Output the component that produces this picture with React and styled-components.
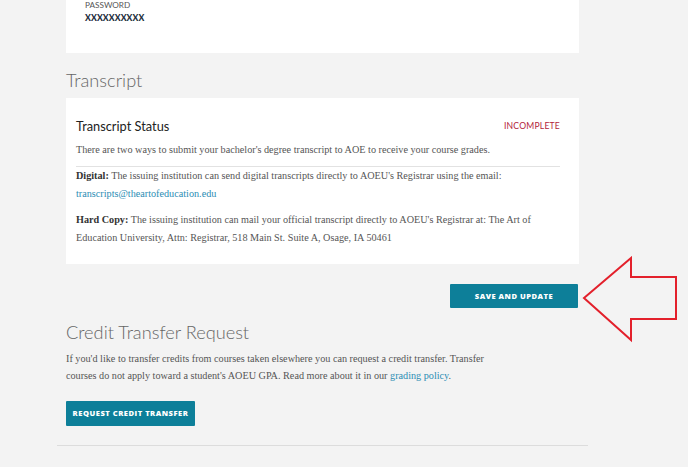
import styled, { createGlobalStyle } from "styled-components";

const GlobalStyle = createGlobalStyle`
    body {
        margin: 0;
        background: #f3f3f3;
    }
`;

const App = () => {
    return (
        <Page>
            <GlobalStyle />
            <Column>
                <Card $tight>
                    <FieldLabel>Password</FieldLabel>
                    <FieldValue>XXXXXXXXXX</FieldValue>
                </Card>

                <SectionTitle>Transcript</SectionTitle>
                <Card>
                    <StatusRow>
                        <StatusTitle>Transcript Status</StatusTitle>
                        <StatusBadge>Incomplete</StatusBadge>
                    </StatusRow>
                    <Text>
                        There are two ways to submit your bachelor's degree transcript to AOE to receive your course grades.
                    </Text>
                    <Rule />
                    <Text>
                        <b>Digital:</b> The issuing institution can send digital transcripts directly to AOEU's Registrar using the email:
                        <br />
                        <Link href="#">transcripts@theartofeducation.edu</Link>
                    </Text>
                    <Text $gap>
                        <b>Hard Copy:</b> The issuing institution can mail your official transcript directly to AOEU's Registrar at: The Art of Education University, Attn: Registrar, 518 Main St. Suite A, Osage, IA 50461
                    </Text>
                </Card>

                <Actions>
                    <Button $w="128px">Save and Update</Button>
                </Actions>

                <SectionTitle $top="12px">Credit Transfer Request</SectionTitle>
                <Intro>
                    If you'd like to transfer credits from courses taken elsewhere you can request a credit transfer. Transfer courses do not apply toward a student's AOEU GPA. Read more about it in our <Link href="#">grading policy</Link>.
                </Intro>
                <Button $w="129px" $h="25px">Request Credit Transfer</Button>
                <BottomRule />
            </Column>

            <Callout width="100" height="90" viewBox="0 0 100 90">
                <polygon
                    points="2,42 49,2 49,21 94,21 94,63 49,63 49,84"
                    fill="none"
                    stroke="#e3202b"
                    strokeWidth="2"
                />
            </Callout>
        </Page>
    );
};

const Page = styled.div`
    position: relative;
    min-height: 467px;
    font-family: Lato, "Open Sans", sans-serif;
`;

const Column = styled.div`
    width: 513px;
    margin-left: 66px;
    padding-bottom: 20px;
`;

const Card = styled.div`
    background: #fff;
    height: ${(p) => (p.$tight ? "53px" : "auto")};
    padding: ${(p) => (p.$tight ? "0 19px" : "18px 19px 16px 10px")};
    box-sizing: border-box;
`;

const FieldLabel = styled.div`
    font-size: 8.2px;
    line-height: 11px;
    text-transform: uppercase;
    color: #555;
`;

const FieldValue = styled.div`
    margin-top: 2px;
    font-size: 8.6px;
    font-weight: 900;
    color: #1d2d3c;
    letter-spacing: 0.1px;
`;

const SectionTitle = styled.h2`
    margin: ${(p) => p.$top || "15px"} 0 6px;
    font-size: 18.2px;
    line-height: 24px;
    font-weight: 300;
    color: #666;
`;

const StatusRow = styled.div`
    display: flex;
    align-items: center;
    justify-content: space-between;
    height: 20px;
    margin-bottom: 5px;
`;

const StatusTitle = styled.div`
    font-size: 12.8px;
    color: #222;
`;

const StatusBadge = styled.div`
    font-size: 8.6px;
    text-transform: uppercase;
    color: #b3243a;
    letter-spacing: 0.2px;
`;

const Text = styled.p`
    margin: ${(p) => (p.$gap ? "7px" : "0")} 0 0;
    font-family: "Liberation Serif", serif;
    font-size: 10.2px;
    line-height: 18.5px;
    color: #555;

    & b {
        color: #333;
    }
`;

const Rule = styled.hr`
    margin: 6px 0 0;
    border: 0;
    border-top: 1px solid #e2e2e2;
`;

const Link = styled.a`
    color: #2b8db4;
    text-decoration: none;
`;

const Actions = styled.div`
    display: flex;
    justify-content: flex-end;
    margin-top: 20px;
    padding-right: 1px;
`;

const Button = styled.button`
    display: block;
    width: ${(p) => p.$w};
    height: ${(p) => p.$h || "24px"};
    border: 0;
    border-radius: 1px;
    background: #0d7f99;
    color: #fff;
    font-family: "Open Sans", sans-serif;
    font-size: 7.6px;
    font-weight: 800;
    letter-spacing: 0.5px;
    text-transform: uppercase;
    padding: 0;
`;

const Intro = styled.p`
    margin: 1px 0 16px;
    max-width: 425px;
    font-family: "Liberation Serif", serif;
    font-size: 10.2px;
    line-height: 17.5px;
    color: #555;
`;

const BottomRule = styled.div`
    margin: 19px -9px 0;
    border-top: 1px solid #dcdcdc;
`;

const Callout = styled.svg`
    position: absolute;
    left: 582px;
    top: 256px;
`;

export default App;
